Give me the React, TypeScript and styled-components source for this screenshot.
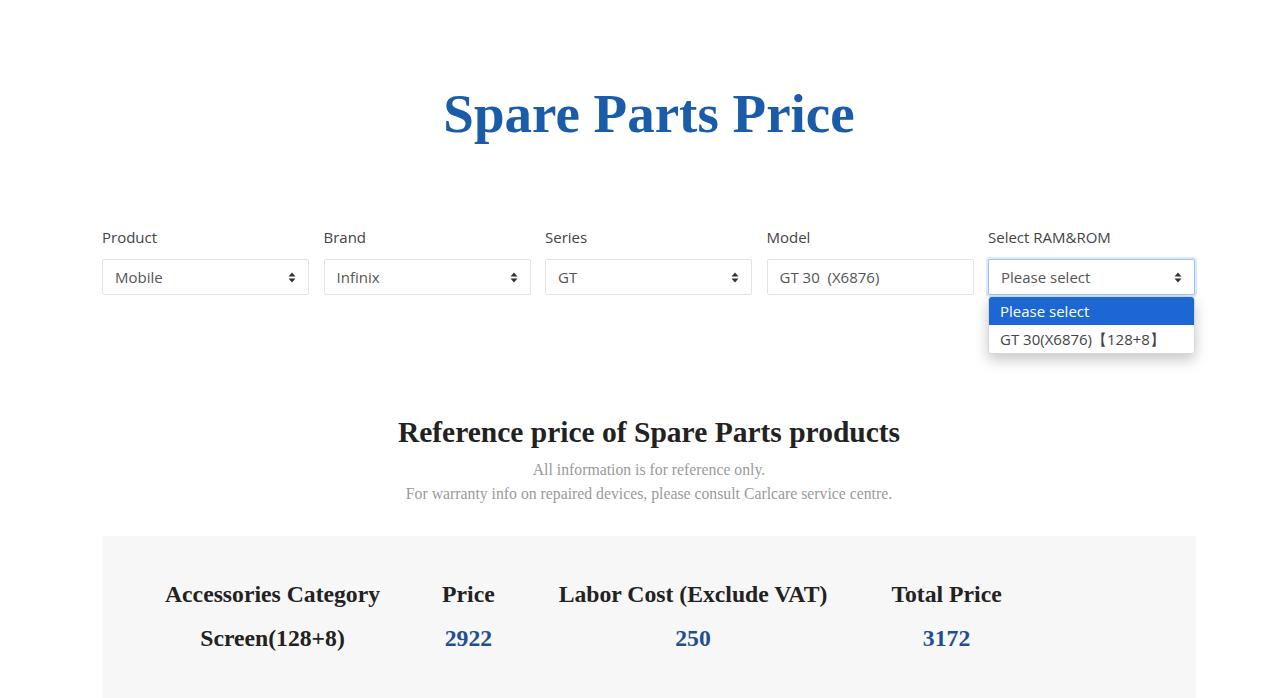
import React from "react";
import styled, { createGlobalStyle } from "styled-components";

const Global = createGlobalStyle`
  html, body { margin: 0; padding: 0; background: #ffffff; }
  body { font-family: "Open Sans", "Noto Sans", sans-serif; }
`;

const Page = styled.div`
  width: 1094px;
  margin-left: 102px;
  padding-top: 82px;
`;

const Title = styled.h1`
  margin: 0;
  text-align: center;
  font-family: "Liberation Serif", "Times New Roman", serif;
  font-weight: 700;
  font-size: 55px;
  line-height: 64px;
  color: #1a5ca8;
`;

const Filters = styled.div`
  margin-top: 81px;
  display: grid;
  grid-template-columns: repeat(5, 207px);
  column-gap: 14.5px;
`;

const Field = styled.div`
  position: relative;
  display: flex;
  flex-direction: column;
`;

const Label = styled.label`
  font-size: 15px;
  line-height: 20px;
  color: #444;
  margin-bottom: 12px;
`;

const Box = styled.div<{ $focused?: boolean }>`
  box-sizing: border-box;
  height: 36px;
  display: flex;
  align-items: center;
  justify-content: space-between;
  padding: 0 12px 0 12px;
  border: 1px solid ${(p) => (p.$focused ? "#9cc4f2" : "#e3e3e3")};
  border-radius: 2px;
  box-shadow: ${(p) => (p.$focused ? "0 0 0 2px rgba(150,190,240,0.35)" : "none")};
  font-size: 15px;
  color: #555;
  background: #fff;
`;

const Caret = () => (
  <svg width="8" height="11" viewBox="0 0 8 11">
    <path d="M4 0.5 L7.5 4.5 H0.5 Z" fill="#333" />
    <path d="M4 10.5 L7.5 6.5 H0.5 Z" fill="#333" />
  </svg>
);

const Menu = styled.ul`
  position: absolute;
  top: 69px;
  left: 0;
  width: 207px;
  box-sizing: border-box;
  margin: 0;
  padding: 0;
  list-style: none;
  background: #fff;
  border: 1px solid #d6d6d6;
  border-radius: 4px;
  box-shadow: 0 6px 14px rgba(0, 0, 0, 0.22);
  overflow: hidden;
  z-index: 5;
`;

const MenuItem = styled.li<{ $active?: boolean }>`
  height: 28px;
  line-height: 28px;
  padding: 0 11px;
  font-size: 15px;
  color: ${(p) => (p.$active ? "#fff" : "#444")};
  background: ${(p) => (p.$active ? "#1c67d3" : "#fff")};
`;

const SubTitle = styled.h2`
  margin: 119px 0 0;
  text-align: center;
  font-family: "Liberation Serif", "Times New Roman", serif;
  font-weight: 700;
  font-size: 29.5px;
  line-height: 36px;
  color: #222;
`;

const Note = styled.p`
  margin: 0;
  text-align: center;
  font-family: "Liberation Serif", "Times New Roman", serif;
  font-size: 15.75px;
  line-height: 24px;
  color: #9a9a9a;
  &:first-of-type { margin-top: 8px; }
`;

const PricePanel = styled.div`
  margin-top: 30px;
  background: #f7f7f7;
  padding: 36px 0 40px 31px;
`;

const Table = styled.table`
  border-collapse: collapse;
  font-family: "Liberation Serif", "Times New Roman", serif;
  font-weight: 700;
  font-size: 23.7px;
  line-height: 30px;
`;

const Th = styled.th`
  padding: 7px 32px;
  text-align: center;
  color: #222;
  white-space: nowrap;
  &:first-child { padding-right: 30px; }
`;

const Td = styled.td<{ $accent?: boolean }>`
  padding: 7px 32px;
  text-align: center;
  color: ${(p) => (p.$accent ? "#1f4f8f" : "#222")};
  white-space: nowrap;
  &:first-child { padding-right: 30px; }
`;

const fields = [
  { label: "Product", value: "Mobile", caret: true },
  { label: "Brand", value: "Infinix", caret: true },
  { label: "Series", value: "GT", caret: true },
  { label: "Model", value: "GT 30\u00a0\u00a0(X6876)", caret: false },
];

export default function App() {
  return (
    <>
      <Global />
      <Page>
        <Title>Spare Parts Price</Title>
        <Filters>
          {fields.map((f) => (
            <Field key={f.label}>
              <Label>{f.label}</Label>
              <Box>
                <span>{f.value}</span>
                {f.caret && <Caret />}
              </Box>
            </Field>
          ))}
          <Field>
            <Label>Select RAM&amp;ROM</Label>
            <Box $focused>
              <span>Please select</span>
              <Caret />
            </Box>
            <Menu>
              <MenuItem $active>Please select</MenuItem>
              <MenuItem>GT 30(X6876)【128+8】</MenuItem>
            </Menu>
          </Field>
        </Filters>
        <SubTitle>Reference price of Spare Parts products</SubTitle>
        <Note>All information is for reference only.</Note>
        <Note>For warranty info on repaired devices, please consult Carlcare service centre.</Note>
        <PricePanel>
          <Table>
            <thead>
              <tr>
                <Th>Accessories Category</Th>
                <Th>Price</Th>
                <Th>Labor Cost (Exclude VAT)</Th>
                <Th>Total Price</Th>
              </tr>
            </thead>
            <tbody>
              <tr>
                <Td>Screen(128+8)</Td>
                <Td $accent>2922</Td>
                <Td $accent>250</Td>
                <Td $accent>3172</Td>
              </tr>
            </tbody>
          </Table>
        </PricePanel>
      </Page>
    </>
  );
}
